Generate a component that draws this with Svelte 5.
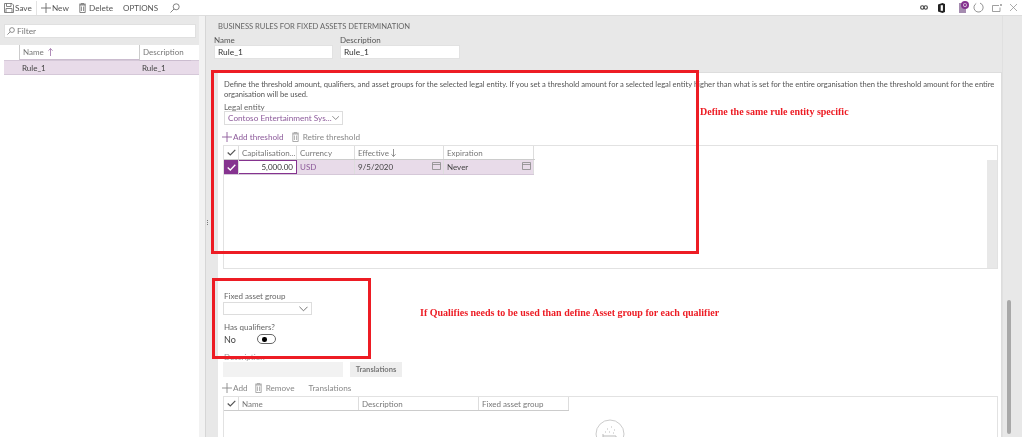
<script lang="ts">
  const check = 'M.7 3.5L3.3 6 8.300.8';
  const bin = 'M.8 2h5.4v7.500H.8zM0 1.200h7M2.200 1.200V.4h2.600v.8M2.400 3.500v4.500M4.600 3.500v4.500';
</script>

<div class="page">
  <header class="topbar">
    <div class="cmds">
      <button class="cmd save"><svg viewBox="0 0 10 10" width="10" height="10"><path d="M.5.5h7.500l1.500 1.500v7.500h-9zM2.500.5v3h4.500v-3M2 9.500v-4h6v4" fill="none" stroke="#666" stroke-width=".8"/></svg>Save</button>
      <span class="sep"></span>
      <button class="cmd new"><svg viewBox="0 0 10 10" width="10" height="10"><path d="M5 0v10M0 5h10" stroke="#666" stroke-width=".9"/></svg>New</button>
      <button class="cmd del"><svg viewBox="0 0 7 10" width="7" height="10"><path d={bin} fill="none" stroke="#666" stroke-width=".8"/></svg>Delete</button>
      <button class="cmd opt">OPTIONS</button>
      <svg viewBox="0 0 10 10" width="10" height="10"><circle cx="6.200" cy="3.800" r="3" fill="none" stroke="#666" stroke-width=".8"/><path d="M4 6L.5 9.500" stroke="#666" stroke-width=".8"/></svg>
    </div>
    <div class="tray">
      <svg viewBox="0 0 8 5" width="8" height="5"><circle cx="2.300" cy="2.500" r="1.700" fill="none" stroke="#444" stroke-width="1.100"/><circle cx="5.700" cy="2.500" r="1.700" fill="none" stroke="#444" stroke-width="1.100"/></svg>
      <svg viewBox="0 0 7 10" width="7" height="10"><path d="M0 1.500L4.500 0 7 1v8L4.500 10 0 8.500z" fill="#222"/><path d="M2.700 2.200h2.200v5.600H2.700z" fill="#fff"/></svg>
      <span class="msg"><span class="badge">0</span></span>
      <svg viewBox="0 0 11 11" width="11" height="11"><path d="M7 1.100A4.600 4.600 0 1 1 3.200 1.500" fill="none" stroke="#888" stroke-width=".9"/></svg>
      <svg viewBox="0 0 10 8" width="10" height="8"><path d="M7 1.500H.5v6h7.500v-4" fill="none" stroke="#888" stroke-width=".8"/><circle cx="9" cy="1" r=".9" fill="#888"/></svg>
      <svg viewBox="0 0 7 7" width="7" height="7"><path d="M0 0l7 7M7 0L0 7" stroke="#888" stroke-width=".7"/></svg>
    </div>
  </header>

  <div class="body">
    <aside class="side">
      <div class="filter-wrap">
        <label class="filter"><svg viewBox="0 0 10 10" width="8" height="8"><circle cx="6.200" cy="3.800" r="3" fill="none" stroke="#666" stroke-width=".9"/><path d="M4 6L.5 9.500" stroke="#666" stroke-width=".9"/></svg>Filter</label>
      </div>
      <div class="list">
        <div class="list-head">
          <span class="c0"></span>
          <span class="c1">Name <svg viewBox="0 0 5 8" width="5" height="8"><path d="M2.500 8V.6M.4 2.700L2.500.6l2.100 2.100" fill="none" stroke="#8c5a9a" stroke-width=".7"/></svg></span>
          <span class="c2">Description</span>
        </div>
        <div class="list-row"><span class="c0"></span><span class="c1">Rule_1</span><span class="c2">Rule_1</span></div>
      </div>
    </aside>

    <div class="splitter"><i></i><i></i><i></i></div>

    <main class="main">
      <div class="caption">BUSINESS RULES FOR FIXED ASSETS DETERMINATION</div>
      <div class="fields">
        <div class="field"><label>Name</label><div class="input">Rule_1</div></div>
        <div class="field"><label>Description</label><div class="input">Rule_1</div></div>
      </div>

      <section class="card">
        <p class="intro">Define the threshold amount, qualifiers, and asset groups for the selected legal entity. If you set a threshold amount for a selected legal entity higher than what is set for the entire organisation then the threshold amount for the entire<br />organisation will be used.</p>
        <label class="lbl ent-lbl">Legal entity</label>
        <div class="select entity"><span>Contoso Entertainment Sys...</span><svg viewBox="0 0 10 6" width="9" height="6"><path d="M.5.5L5 5 9.500.5" fill="none" stroke="#666"/></svg></div>
        <div class="toolbar">
          <span class="tool on"><svg viewBox="0 0 10 10" width="10" height="10"><path d="M5 0v10M0 5h10" stroke="#8c5a9a" stroke-width=".9"/></svg>Add threshold</span>
          <span class="tool"><svg class="bin" viewBox="0 0 7 10" width="7" height="10"><path d={bin} fill="none" stroke="#999" stroke-width=".8"/></svg>Retire threshold</span>
        </div>

        <div class="grid-box">
          <div class="thead t1">
            <span class="chk"><svg viewBox="0 0 9 7" width="9" height="7"><path d={check} fill="none" stroke="#555" stroke-width="1.200"/></svg></span>
            <span class="g-cap">Capitalisation...</span>
            <span class="g-cur">Currency</span>
            <span class="g-eff">Effective <svg viewBox="0 0 5 8" width="5" height="8"><path d="M2.500 0v7.400M.4 5.300l2.100 2.100 2.100-2.100" fill="none" stroke="#666" stroke-width=".7"/></svg></span>
            <span class="g-exp">Expiration</span>
          </div>
          <div class="trow t1">
            <span class="chk sel"><svg viewBox="0 0 9 7" width="9" height="7"><path d={check} fill="none" stroke="#fff" stroke-width="1.300"/></svg></span>
            <span class="g-cap edit">5,000.00</span>
            <span class="g-cur usd">USD</span>
            <span class="g-eff">9/5/2020<svg class="cal" viewBox="0 0 9 8" width="9" height="8"><path d="M.5.5h8v7h-8zM.5 2.500h8" fill="none" stroke="#888" stroke-width=".8"/></svg></span>
            <span class="g-exp">Never<svg class="cal" viewBox="0 0 9 8" width="9" height="8"><path d="M.5.5h8v7h-8zM.5 2.500h8" fill="none" stroke="#888" stroke-width=".8"/></svg></span>
          </div>
          <div class="vbar"></div>
        </div>

        <div class="lower">
          <label class="lbl">Fixed asset group</label>
          <div class="select fag"><span></span><svg viewBox="0 0 10 6" width="9" height="6"><path d="M.5.5L5 5 9.500.5" fill="none" stroke="#666"/></svg></div>
          <label class="lbl hq">Has qualifiers?</label>
          <div class="toggle-line"><span class="no">No</span><span class="toggle"><b></b></span></div>
          <label class="lbl dim">Description</label>
          <div class="desc-line"><div class="desc-input"></div><span class="trans-btn">Translations</span></div>
          <div class="toolbar t2">
            <span class="tool"><svg viewBox="0 0 10 10" width="10" height="10"><path d="M5 0v10M0 5h10" stroke="#888" stroke-width=".9"/></svg>Add</span>
            <span class="tool"><svg class="bin" viewBox="0 0 7 10" width="7" height="10"><path d={bin} fill="none" stroke="#999" stroke-width=".8"/></svg>Remove</span>
            <span class="tool tr">Translations</span>
          </div>
          <div class="grid-box second">
            <div class="thead t3">
              <span class="chk"><svg viewBox="0 0 9 7" width="9" height="7"><path d={check} fill="none" stroke="#555" stroke-width="1.200"/></svg></span>
              <span class="h-name">Name</span>
              <span class="h-desc">Description</span>
              <span class="h-fag">Fixed asset group</span>
            </div>
            <svg class="empty" viewBox="0 0 30 30" width="30" height="30"><circle cx="15" cy="15" r="14" fill="none" stroke="#ccc"/><path d="M8 17h13v6H8zM8 17v-2M12 10h1M16 8h1M19 11h1M14 13h1M18 14h1M10 13h1" fill="none" stroke="#bbb" stroke-width="1"/></svg>
          </div>
        </div>
      </section>

      <div class="page-scroll"><i></i></div>
    </main>
  </div>

  <div class="mark box1"></div>
  <div class="mark box2"></div>
  <div class="note n1">Define the same rule entity specific</div>
  <div class="note n2">If Qualifies needs to be used than define Asset group for each qualifier</div>
</div>

<style>
  :global(body) { margin: 0; }
  .page {
    position: relative;
    width: 1022px;
    height: 437px;
    overflow: hidden;
    background: #e8e8e8;
    font-family: Lato, "Open Sans", sans-serif;
    color: #444;
    font-size: 8px;
    filter: blur(.3px);
  }
  .topbar {
    height: 16px;
    box-sizing: border-box;
    background: #fff;
    display: flex;
    justify-content: space-between;
    align-items: center;
    border-bottom: 1px solid #ddd;
  }
  .cmds { display: flex; align-items: center; padding-left: 4px; }
  .cmd {
    border: 0; background: none; padding: 0; margin: 0;
    display: flex; align-items: center; gap: 1px;
    font: inherit; color: #555; font-size: 8.200px;
  }
  .save { width: 32px; }
  .sep { width: 1px; height: 14px; background: #e3e3e3; margin-right: 4px; }
  .new { width: 38px; gap: 1px; }
  .del { width: 44px; gap: 3px; }
  .opt { width: 47px; font-size: 8px; }
  .tray { display: flex; align-items: center; gap: 8px; padding-right: 5px; }
  .tray svg:nth-child(2) { margin-left: 2px; }
  .msg { width: 7px; height: 10px; background: #a58cb0; position: relative; margin-left: 6px; margin-right: -1px; }
  .badge {
    position: absolute; top: -2px; left: 2px;
    width: 8px; height: 8px; border-radius: 50%;
    background: #85338f; color: #fff; font-size: 6px; line-height: 8px; text-align: center;
  }
  .body { display: flex; height: 421px; }
  .side { width: 199px; flex: none; display: flex; flex-direction: column; }
  .filter-wrap { height: 29px; padding: 8px 3px 0 4px; box-sizing: border-box; }
  .filter {
    height: 14px; background: #fff;
    border: 1px solid #e0e0e0;
    display: flex; align-items: center; gap: 2px; padding-left: 2px;
    box-sizing: border-box; color: #777; font-size: 8.400px;
  }
  .list { padding-left: 4px; flex: 1; background: #fff; }
  .list-head, .list-row { display: flex; height: 15px; align-items: center; box-sizing: border-box; }
  .list-head { color: #777; }
  .list-head span { height: 100%; display: flex; align-items: center; gap: 4px; }
  .list-head .c1, .list-head .c2 { border-left: 1px solid #ccc; }
  .list-head .c2 { border-bottom: 1px solid #cbbccf; }
  .list-head .c1 { border-bottom: 1px solid #cbbccf; }
  .c0 { width: 15px; flex: none; }
  .c1 { width: 120px; padding-left: 3px; box-sizing: border-box; flex: none; }
  .c2 { padding-left: 3px; width: 48px; }
  .list-row { background: #e8dbe9; border-top: 1px solid #d5c8d8; border-bottom: 1px solid #d5c8d8; }
  .list-row .c1 { padding-left: 3px; }
  .splitter {
    width: 6px; flex: none;
    background: #f2f2f2;
    border-right: 1px solid #d6d6d6;
    display: flex; flex-direction: column; gap: 1px; align-items: center; justify-content: center;
    padding-bottom: 8px; box-sizing: content-box;
    padding-left: 0;
  }
  .splitter i { width: 1px; height: 1px; background: #777; margin-left: 13px; position: relative; left: -1px; }
  .main { flex: 1; position: relative; padding-left: 8px; min-width: 0; }
  .caption { margin: 4px 0 0 4px; color: #666; height: 13px; line-height: 13px; font-size: 7.600px; }
  .fields { display: flex; margin-top: 2px; }
  .field { width: 126px; }
  .field label { display: block; color: #555; height: 10px; line-height: 10px; }
  .input {
    width: 119px; height: 14px; background: #fff; box-sizing: border-box;
    border: 1px solid #e2e2e2; padding-left: 3px; line-height: 12px; color: #333; font-size: 8.400px;
  }
  .field + .field .input { width: 120px; }
  .card {
    margin: 13px 0 0 4px; width: 784px; height: 366px;
    background: #fff; box-sizing: border-box; padding: 6px 5px 0 6px;
    border-right: 1px solid #ddd; border-top: 1px solid #ddd;
  }
  .intro { margin: 0; line-height: 10px; font-size: 7.600px; color: #555; white-space: nowrap; }
  .lbl { display: block; color: #666; line-height: 9px; height: 9px; }
  .ent-lbl { margin-top: 4px; height: 8px; }
  .select {
    display: flex; justify-content: space-between; align-items: center;
    height: 14px; box-sizing: border-box; border: 1px solid #ddd; padding: 0 3px;
    background: #fff;
  }
  .entity { width: 119px; color: #8c5a9a; white-space: nowrap; font-size: 8.200px; }
  .toolbar { display: flex; gap: 8px; height: 14px; align-items: center; margin-top: 5px; margin-left: -2px; }
  .tool { display: flex; align-items: center; gap: 1px; color: #888; font-size: 8.200px; }
  .tool.on { color: #8c5a9a; }
  .bin { margin-right: 3px; }
  .grid-box {
    margin: 1px 0 0 -1px; border: 1px solid #e2e2e2; height: 124px; width: 775px; position: relative; box-sizing: border-box;
  }
  .thead, .trow { display: flex; box-sizing: border-box; }
  .thead { height: 14px; width: 311px; border-bottom: 1px solid #ccc; color: #777; }
  .trow { height: 15px; }
  .thead span, .trow span { display: flex; align-items: center; padding-left: 3px; box-sizing: border-box; border-right: 1px solid #ddd; position: relative; flex: none; }
  .thead span svg:not(:first-child) { margin-left: 1px; }
  .chk { width: 15px; padding-left: 3px; }
  .g-cap { width: 58px; }
  .g-cur { width: 58px; }
  .g-eff { width: 89px; gap: 2px; }
  .g-exp { width: 90px; }
  .trow { width: 310px; background: #e8dbe9; color: #444; border-bottom: 1px solid #d5c8d8; }
  .chk.sel { background: #85338f; }
  .edit { background: #fff; justify-content: flex-end; padding-right: 3px; border: 1px solid #85338f !important; border-left-width: 0 !important; color: #333; }
  .usd { color: #8c5a9a; }
  .cal { position: absolute; right: 2px; top: 2px; }
  .vbar { position: absolute; right: 0; top: 14px; bottom: 0; width: 10px; background: #e8e8e8; }
  .lower { margin-top: 23px; }
  .fag { width: 89px; height: 13px; margin: 1px 0 0 -1px; }
  .hq { margin-top: 8px; }
  .toggle-line { display: flex; align-items: center; height: 12px; font-size: 9px; margin-top: 1px; }
  .no { width: 33px; }
  .toggle { width: 19px; height: 10px; border: 1px solid #666; border-radius: 6px; display: block; position: relative; box-sizing: border-box; }
  .toggle b { position: absolute; left: 4px; top: 2px; width: 4.500px; height: 4.500px; border-radius: 50%; background: #000; }
  .dim { margin-top: 8px; color: #999; }
  .desc-line { display: flex; gap: 7px; margin: 0 0 0 -1px; }
  .desc-input { width: 120px; height: 15px; background: #f2f2f2; }
  .trans-btn { width: 52px; height: 15px; background: #eee; line-height: 15px; text-align: center; color: #777; font-weight: 700; font-size: 7.600px; }
  .t2 { margin-top: 4px; gap: 7px; }
  .tr { margin-left: 7px; }
  .second { margin-top: 1px; height: 60px; }
  .t3 { width: 345px; }
  .h-name { width: 120px; }
  .h-desc { width: 120px; }
  .h-fag { width: 90px; }
  .empty { position: absolute; left: 371px; top: 22px; }
  .page-scroll { position: absolute; left: 796px; top: 0; bottom: 0; width: 20px; border-left: 1px solid #e0e0e0; box-sizing: border-box; }
  .page-scroll i { position: absolute; left: 4px; top: 284px; width: 4px; height: 134px; background: #a8a8a8; border-radius: 2px; }
  .mark { position: absolute; border: 3px solid #ed1c24; box-sizing: border-box; }
  .box1 { left: 211px; top: 70px; width: 488px; height: 184px; }
  .box2 { left: 212px; top: 278px; width: 159px; height: 81px; }
  .note { position: absolute; font-family: "Liberation Serif", serif; font-weight: 700; color: #ed1c24; font-size: 10px; white-space: nowrap; line-height: 12px; }
  .n1 { left: 700px; top: 106px; }
  .n2 { left: 420px; top: 307px; }
</style>
